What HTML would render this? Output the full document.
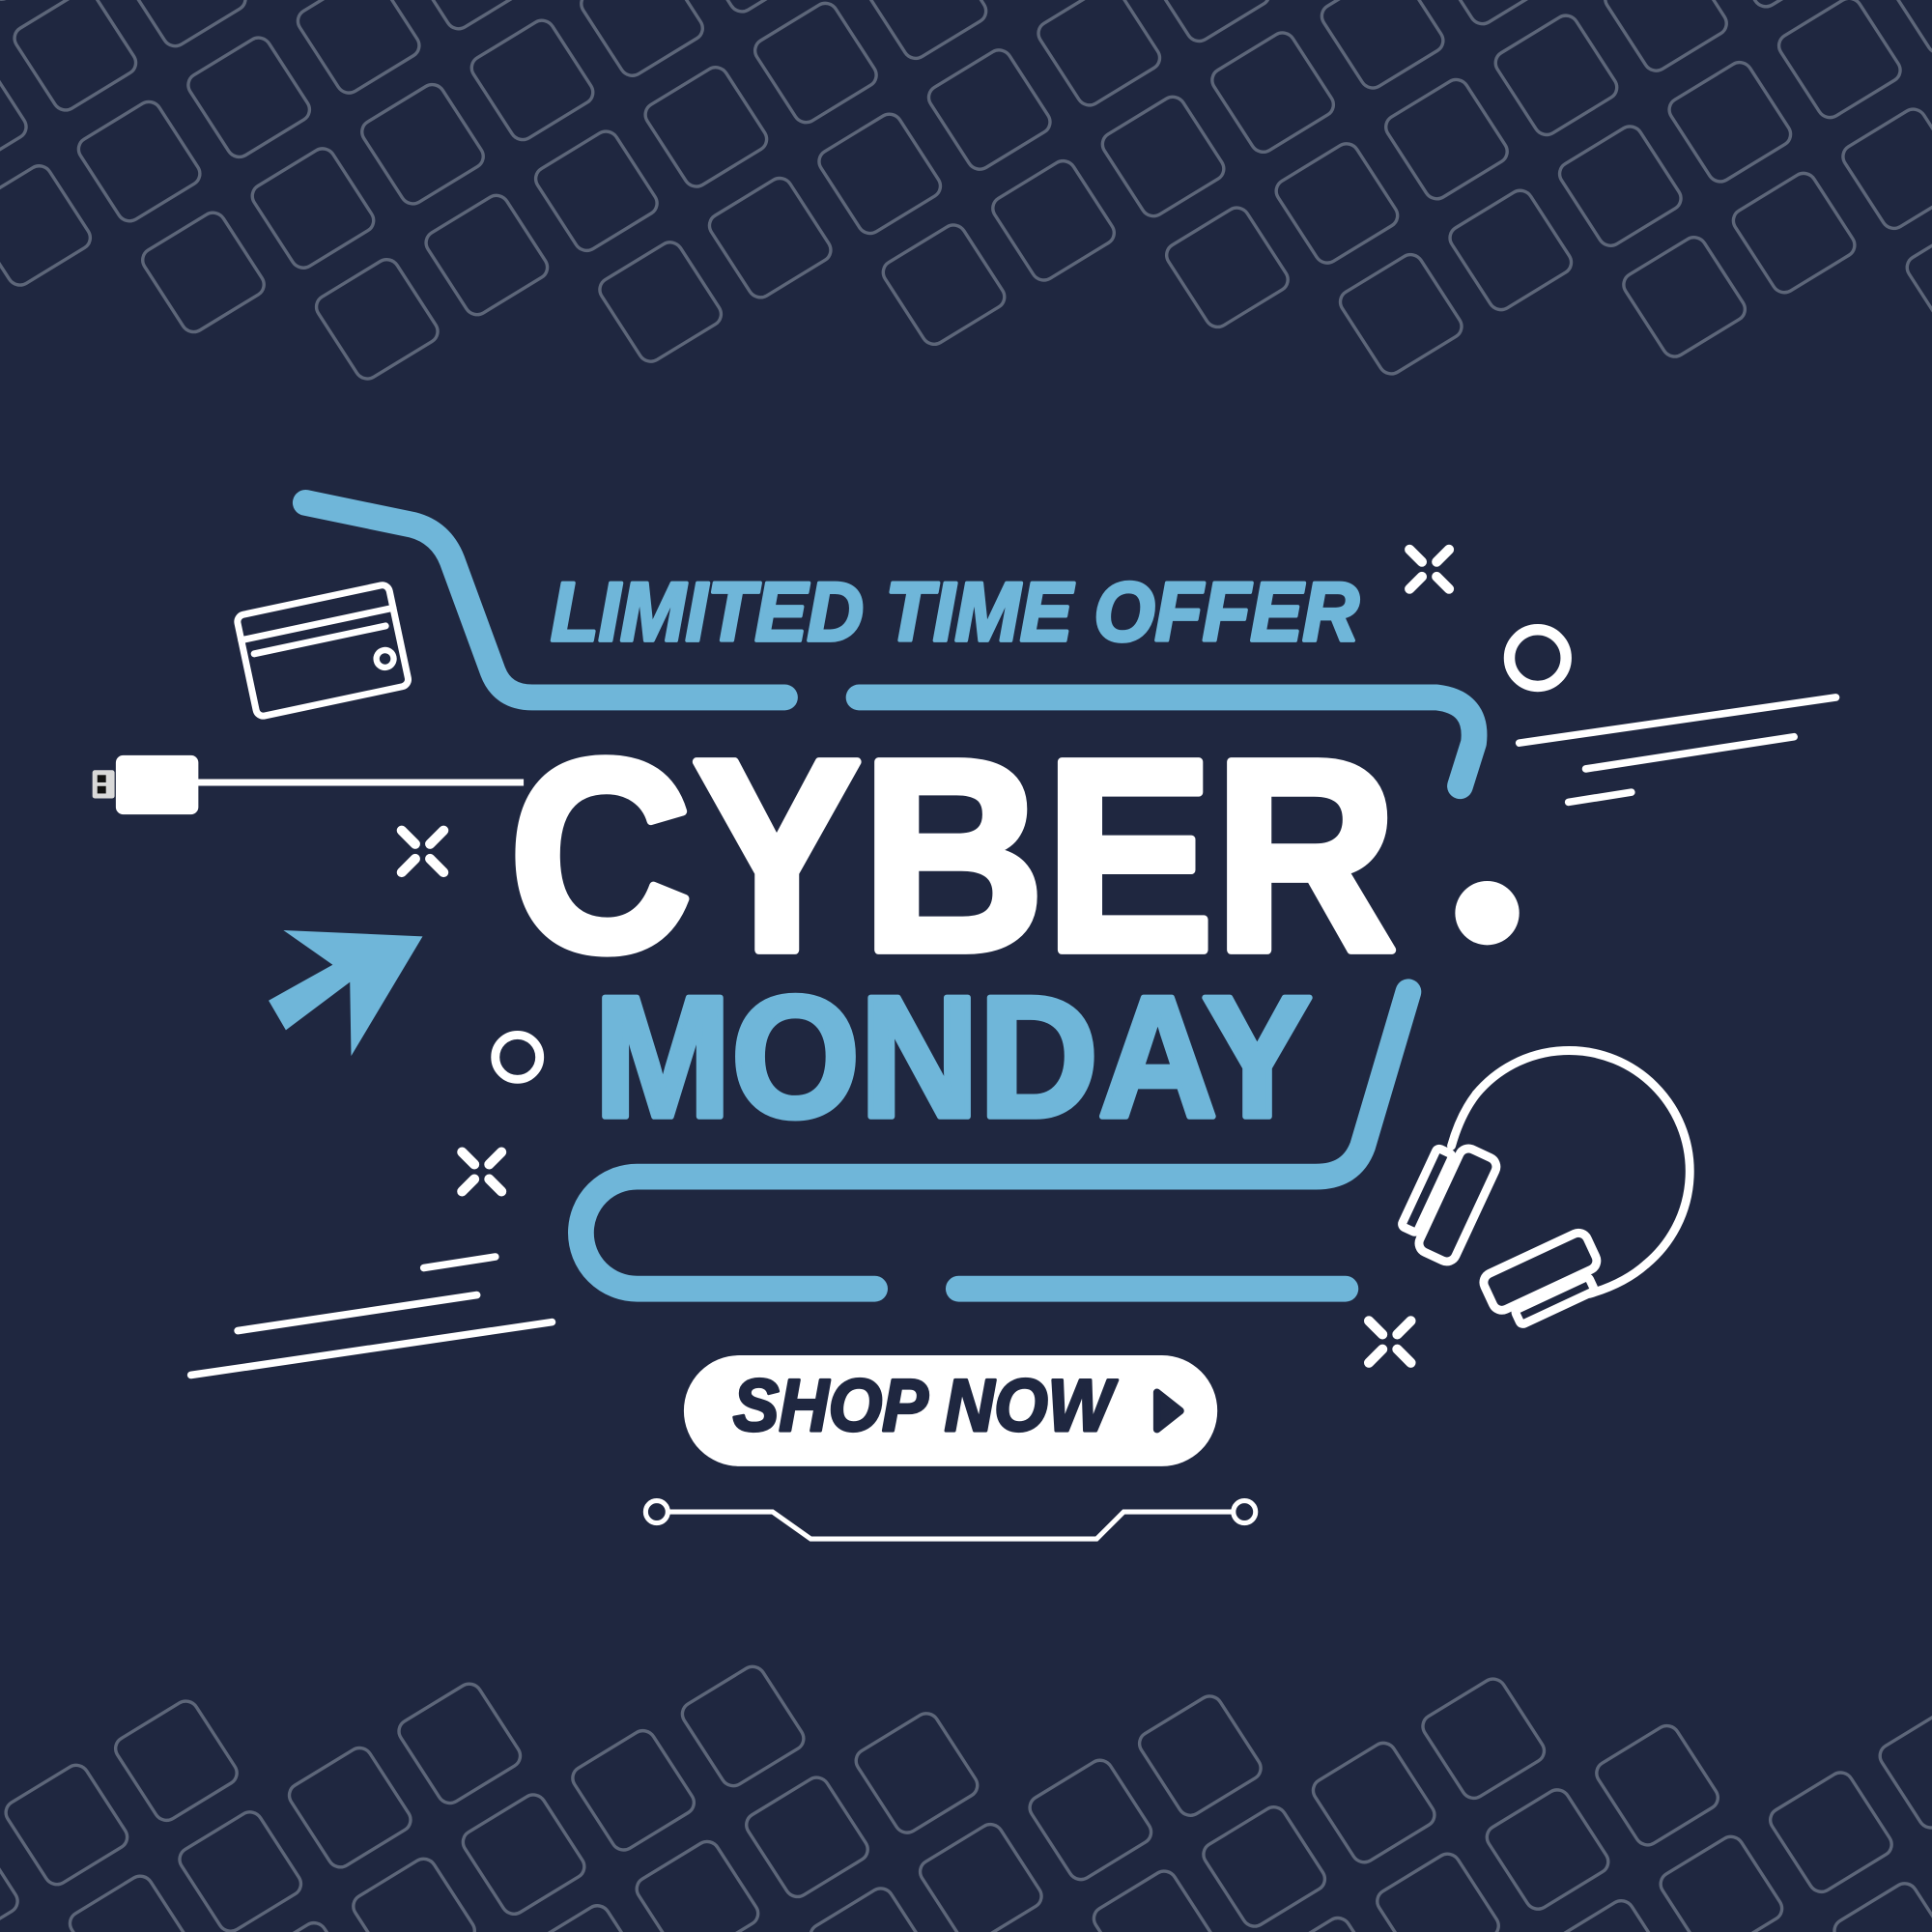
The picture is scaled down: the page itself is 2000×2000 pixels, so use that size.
<!DOCTYPE html>
<html><head><meta charset="utf-8"><style>
html,body{margin:0;padding:0;background:#1f2740;overflow:hidden;width:2000px;height:2000px;}
svg{display:block;}
</style></head><body>
<svg id="s" width="2000" height="2000" viewBox="0 0 1568 1568" xmlns="http://www.w3.org/2000/svg">
<rect width="1568" height="1568" fill="#1f2740"/>
<g id="tiles" fill="none" stroke="#5d6679" stroke-width="3.4"></g>

<!-- blue lines -->
<g fill="none" stroke="#6fb6d9" stroke-width="21" stroke-linecap="round" stroke-linejoin="round">
<path d="M248,408 L335,426 Q358,432 367,455 L400,545 Q408,566 432,566 L637,566"/>
<path d="M697,566 L1166,566 Q1200,570 1196,603 L1185,638"/>
<path d="M1143,805 L1106,930 Q1097,955 1068,955 L517,955 A45.5,45.5 0 0 0 517,1046 L710,1046"/>
<path d="M778,1046 L1092,1046"/>
</g>

<!-- cursor arrow -->
<polygon points="230,755 343,760 285,857 284,797 232,836 218,812 270,783" fill="#6fb6d9"/>

<!-- card -->
<g transform="translate(262,528) rotate(-12)" fill="none" stroke="#fff" stroke-width="5.5" stroke-linecap="round">
<rect x="-63" y="-42" width="126" height="84" rx="6"/>
<line x1="-63" y1="-22" x2="63" y2="-22"/>
<line x1="-55" y1="-9" x2="54" y2="-9"/>
<circle cx="48" cy="17" r="7" stroke-width="5"/>
</g>

<!-- usb -->
<line x1="158" y1="635" x2="425" y2="635" stroke="#fff" stroke-width="5.5"/>
<rect x="75" y="625" width="18" height="23" rx="2" fill="#d9d9d9"/>
<rect x="79" y="629" width="7" height="6" fill="#111"/>
<rect x="79" y="638" width="7" height="6" fill="#111"/>
<rect x="94" y="613" width="67" height="48" rx="6" fill="#fff"/>

<!-- sparkles -->
<g stroke="#fff" stroke-width="8" stroke-linecap="round">
<g transform="translate(1160,462)"><path d="M-6,-6 L-16,-16 M6,-6 L16,-16 M-6,6 L-16,16 M6,6 L16,16"/></g>
<g transform="translate(343,691)"><path d="M-6,-6 L-17,-17 M6,-6 L17,-17 M-6,6 L-17,17 M6,6 L17,17"/></g>
<g transform="translate(391,951)"><path d="M-6,-6 L-16,-16 M6,-6 L16,-16 M-6,6 L-16,16 M6,6 L16,16"/></g>
<g transform="translate(1128,1089)"><path d="M-6,-6 L-17,-17 M6,-6 L17,-17 M-6,6 L-17,17 M6,6 L17,17"/></g>
</g>

<!-- circles -->
<circle cx="1248" cy="534" r="23" fill="none" stroke="#fff" stroke-width="9"/>
<circle cx="420" cy="858" r="18" fill="none" stroke="#fff" stroke-width="7"/>
<circle cx="1207" cy="741" r="26" fill="#fff"/>

<!-- speed lines -->
<g stroke="#fff" stroke-width="6" stroke-linecap="round">
<line x1="1233" y1="603" x2="1490" y2="566"/>
<line x1="1287" y1="624" x2="1456" y2="598"/>
<line x1="1273" y1="651" x2="1324" y2="643"/>
<line x1="344" y1="1029" x2="402" y2="1020"/>
<line x1="193" y1="1080" x2="387" y2="1051"/>
<line x1="155" y1="1116" x2="448" y2="1073"/>
</g>

<!-- headphones -->
<g fill="none" stroke="#fff" stroke-width="7" stroke-linecap="round" stroke-linejoin="round">
<path d="M1198,888 A98,98 0 1 1 1336,1026"/>
<path d="M1198,888 Q1185,905 1178,930"/>
<path d="M1336,1026 Q1318,1042 1290,1050"/>
<g transform="translate(1183,978) rotate(25)"><rect x="-16" y="-46" width="32" height="92" rx="8"/></g>
<g transform="translate(1160,967) rotate(25)"><rect x="-9" y="-35" width="14" height="70" rx="3"/></g>
<g transform="translate(1250,1032) rotate(-25)"><rect x="-46" y="-16" width="92" height="32" rx="8"/></g>
<g transform="translate(1262,1056) rotate(-25)"><rect x="-33" y="-7" width="66" height="13" rx="3"/></g>
</g>

<!-- text -->
<text x="447" y="520" textLength="656" lengthAdjust="spacingAndGlyphs" font-family="Liberation Sans, sans-serif" font-weight="bold" font-style="italic" font-size="68" fill="#6fb6d9" stroke="#6fb6d9" stroke-width="3" stroke-linejoin="round">LIMITED TIME OFFER</text>
<text x="413" y="771" textLength="721" lengthAdjust="spacingAndGlyphs" font-family="Liberation Sans, sans-serif" font-weight="bold" font-size="222" fill="#fff" stroke="#fff" stroke-width="7" stroke-linejoin="round">CYBER</text>
<text x="482" y="906" textLength="583" lengthAdjust="spacingAndGlyphs" font-family="Liberation Sans, sans-serif" font-weight="bold" font-size="140" fill="#6fb6d9" stroke="#6fb6d9" stroke-width="5" stroke-linejoin="round">MONDAY</text>

<!-- shop now -->
<rect x="555" y="1100" width="433" height="90" rx="45" fill="#fff"/>
<text x="595" y="1161" textLength="308" lengthAdjust="spacingAndGlyphs" font-family="Liberation Sans, sans-serif" font-weight="bold" font-style="italic" font-size="60" fill="#1f2740" stroke="#1f2740" stroke-width="2.5" stroke-linejoin="round">SHOP NOW</text>
<path d="M939,1130 L958,1145 L939,1160 Z" fill="#1f2740" stroke="#1f2740" stroke-width="6" stroke-linejoin="round"/>

<!-- circuit -->
<g fill="none" stroke="#fff" stroke-width="4">
<circle cx="533" cy="1227" r="9"/>
<circle cx="1010" cy="1227" r="9"/>
<polyline points="542,1227 627,1227 658,1249 890,1249 912,1227 1001,1227"/>
</g>
</svg>
<script>
(function(){
var g=document.getElementById('tiles'),ns='http://www.w3.org/2000/svg';
var a=[141,38],b=[-89,52];
function band(ox,oy,test){
 for(var i=-25;i<=25;i++)for(var j=-25;j<=25;j++){
  var cx=ox+i*a[0]+j*b[0],cy=oy+i*a[1]+j*b[1];
  if(cx<-90||cx>1660||!test(cx,cy))continue;
  var r=document.createElementNS(ns,'rect');
  r.setAttribute('x',-0.5);r.setAttribute('y',-0.5);r.setAttribute('width',1);r.setAttribute('height',1);
  r.setAttribute('rx',0.13);r.setAttribute('ry',0.13);
  r.setAttribute('vector-effect','non-scaling-stroke');
  r.setAttribute('transform','matrix(42 65 -64 39 '+cx+' '+cy+')');
  g.appendChild(r);
 }
}
band(202,79,function(x,y){var lim=262-Math.max(0,200-x)*0.3;return y>-90&&y<lim;});
band(143,1429,function(x,y){return y>1400&&y<1660;});
})();
</script>
</body></html>
